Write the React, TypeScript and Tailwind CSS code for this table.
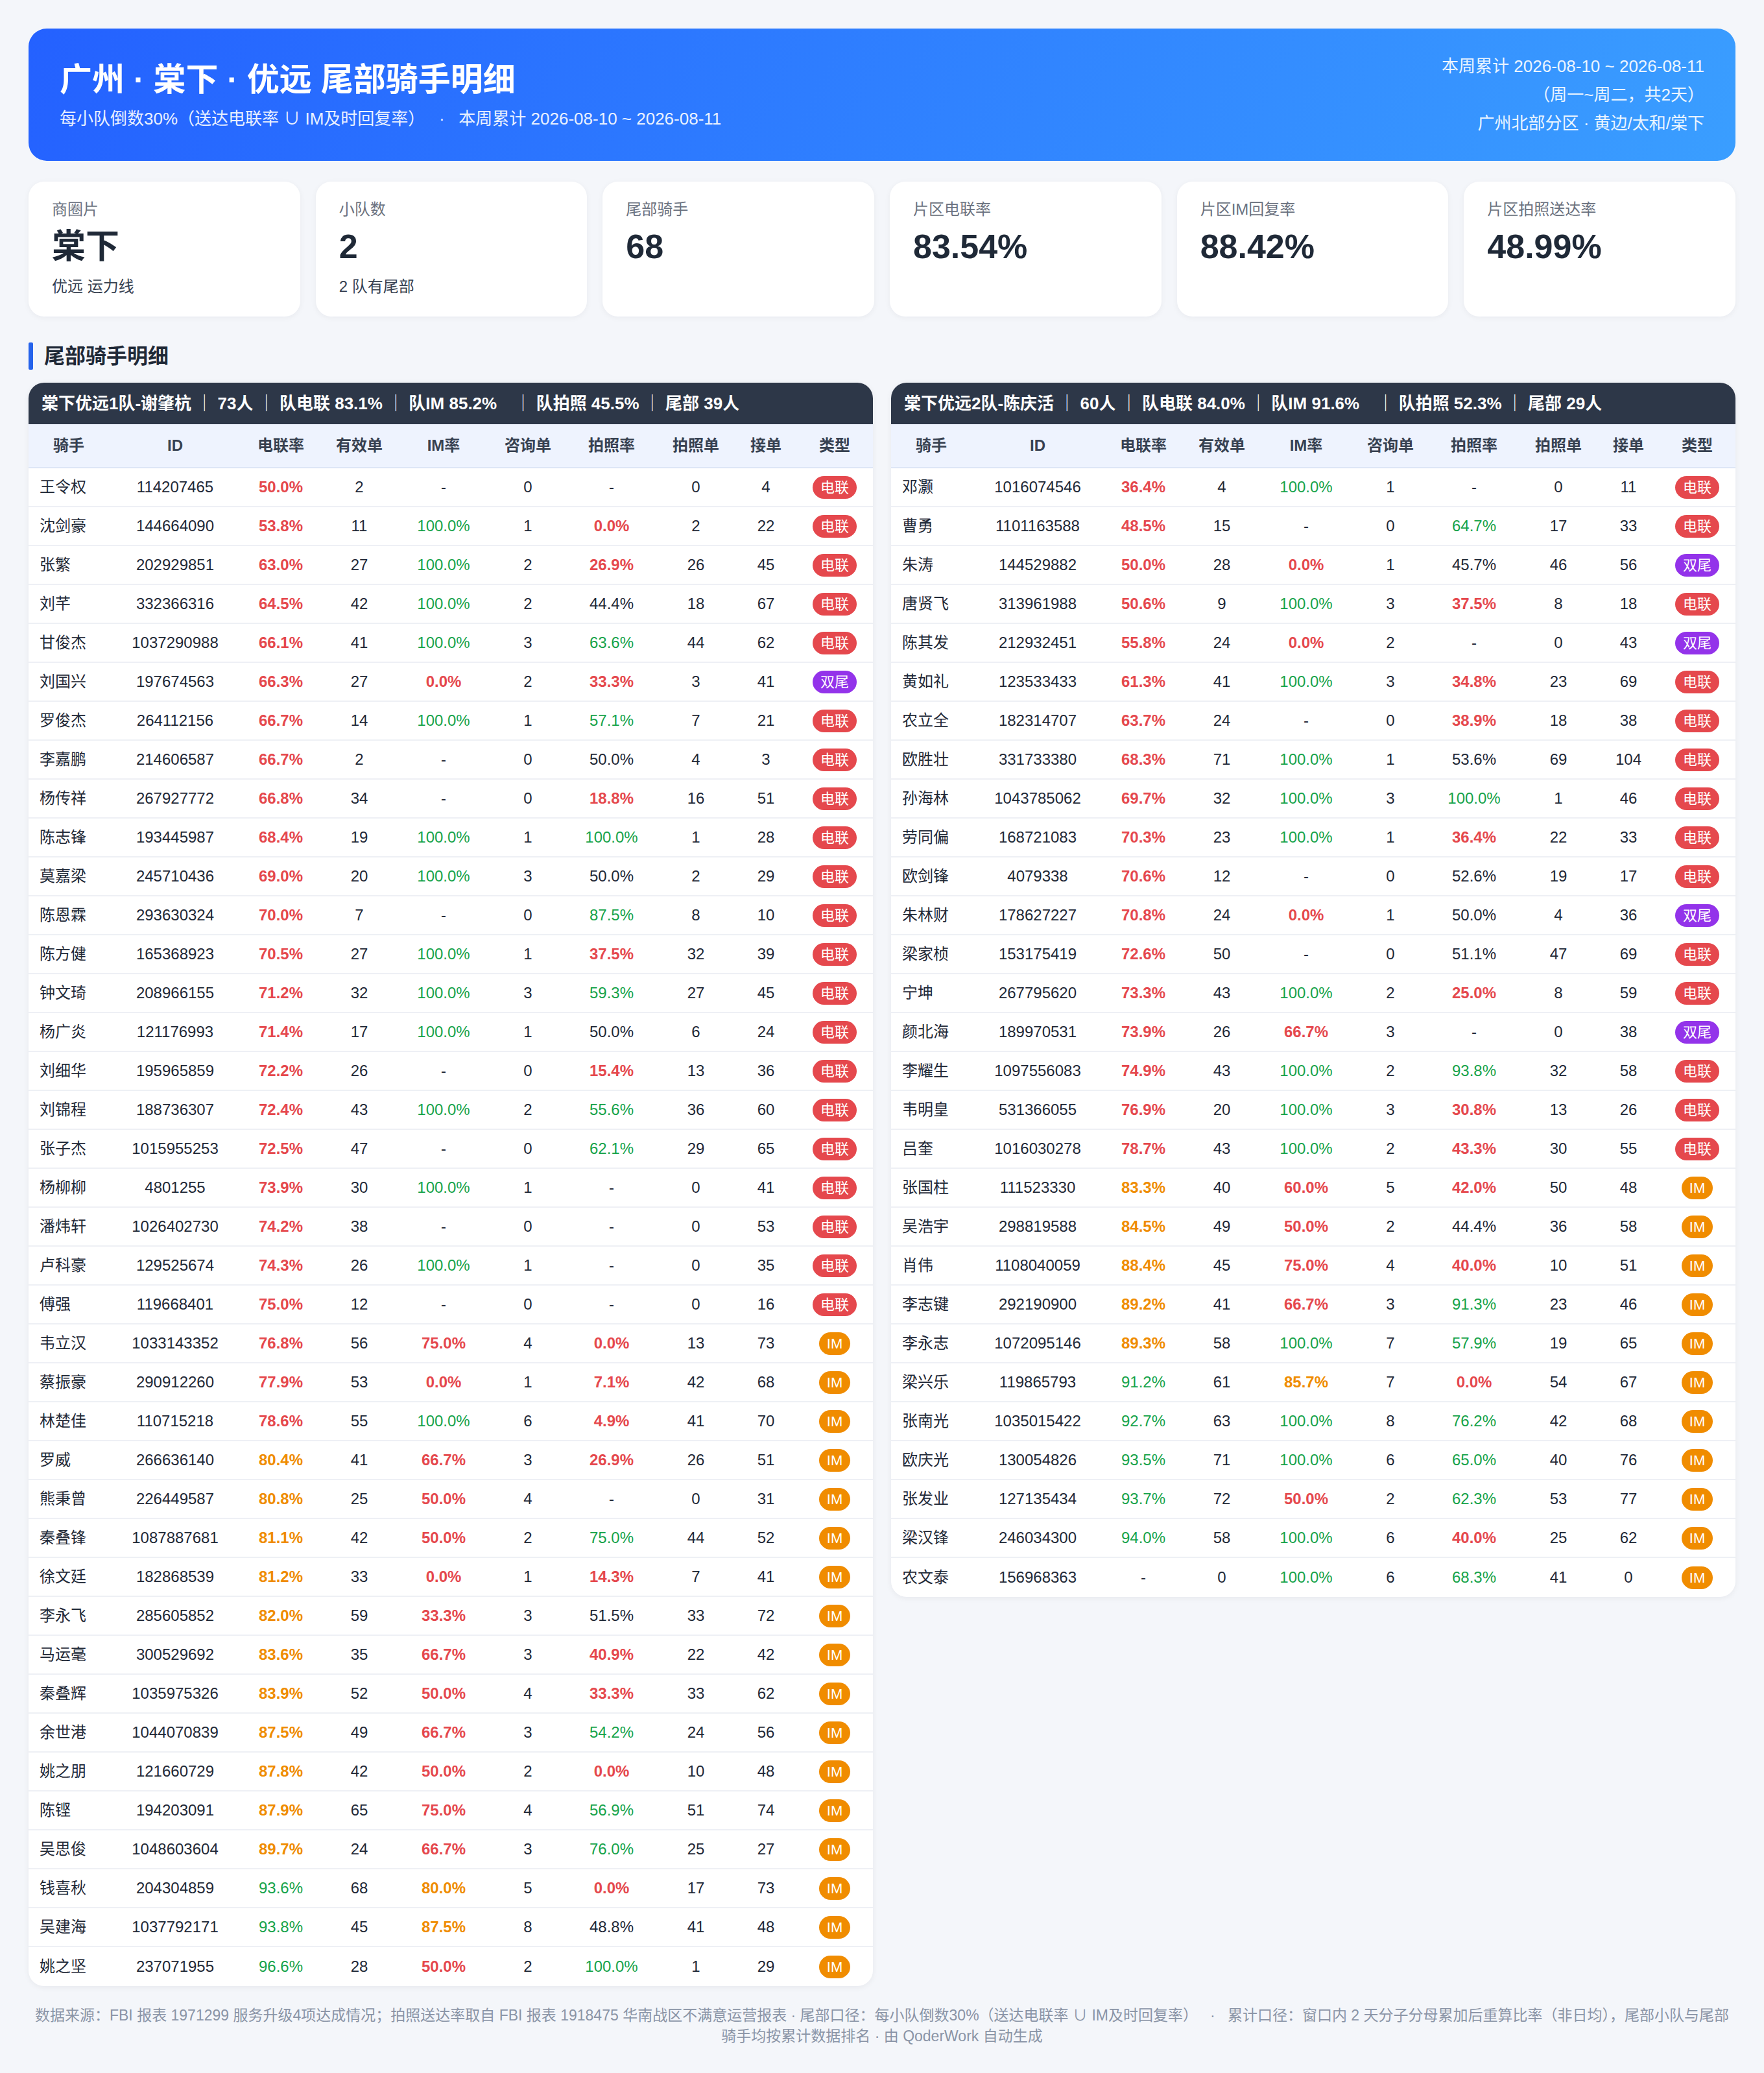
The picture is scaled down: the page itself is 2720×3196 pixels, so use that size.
import React from "react";

// ─── Data ─────────────────────────────────────────────────────────────────────

type Row = [string, string, string, number, string, number, string, number, number, string];

const team1: Row[] = [
  ["王令权", "114207465", "50.0%", 2, "-", 0, "-", 0, 4, "电联"],
  ["沈剑豪", "144664090", "53.8%", 11, "100.0%", 1, "0.0%", 2, 22, "电联"],
  ["张繁", "202929851", "63.0%", 27, "100.0%", 2, "26.9%", 26, 45, "电联"],
  ["刘芊", "332366316", "64.5%", 42, "100.0%", 2, "44.4%", 18, 67, "电联"],
  ["甘俊杰", "1037290988", "66.1%", 41, "100.0%", 3, "63.6%", 44, 62, "电联"],
  ["刘国兴", "197674563", "66.3%", 27, "0.0%", 2, "33.3%", 3, 41, "双尾"],
  ["罗俊杰", "264112156", "66.7%", 14, "100.0%", 1, "57.1%", 7, 21, "电联"],
  ["李嘉鹏", "214606587", "66.7%", 2, "-", 0, "50.0%", 4, 3, "电联"],
  ["杨传祥", "267927772", "66.8%", 34, "-", 0, "18.8%", 16, 51, "电联"],
  ["陈志锋", "193445987", "68.4%", 19, "100.0%", 1, "100.0%", 1, 28, "电联"],
  ["莫嘉梁", "245710436", "69.0%", 20, "100.0%", 3, "50.0%", 2, 29, "电联"],
  ["陈恩霖", "293630324", "70.0%", 7, "-", 0, "87.5%", 8, 10, "电联"],
  ["陈方健", "165368923", "70.5%", 27, "100.0%", 1, "37.5%", 32, 39, "电联"],
  ["钟文琦", "208966155", "71.2%", 32, "100.0%", 3, "59.3%", 27, 45, "电联"],
  ["杨广炎", "121176993", "71.4%", 17, "100.0%", 1, "50.0%", 6, 24, "电联"],
  ["刘细华", "195965859", "72.2%", 26, "-", 0, "15.4%", 13, 36, "电联"],
  ["刘锦程", "188736307", "72.4%", 43, "100.0%", 2, "55.6%", 36, 60, "电联"],
  ["张子杰", "1015955253", "72.5%", 47, "-", 0, "62.1%", 29, 65, "电联"],
  ["杨柳柳", "4801255", "73.9%", 30, "100.0%", 1, "-", 0, 41, "电联"],
  ["潘炜轩", "1026402730", "74.2%", 38, "-", 0, "-", 0, 53, "电联"],
  ["卢科豪", "129525674", "74.3%", 26, "100.0%", 1, "-", 0, 35, "电联"],
  ["傅强", "119668401", "75.0%", 12, "-", 0, "-", 0, 16, "电联"],
  ["韦立汉", "1033143352", "76.8%", 56, "75.0%", 4, "0.0%", 13, 73, "IM"],
  ["蔡振豪", "290912260", "77.9%", 53, "0.0%", 1, "7.1%", 42, 68, "IM"],
  ["林楚佳", "110715218", "78.6%", 55, "100.0%", 6, "4.9%", 41, 70, "IM"],
  ["罗威", "266636140", "80.4%", 41, "66.7%", 3, "26.9%", 26, 51, "IM"],
  ["熊秉曾", "226449587", "80.8%", 25, "50.0%", 4, "-", 0, 31, "IM"],
  ["秦叠锋", "1087887681", "81.1%", 42, "50.0%", 2, "75.0%", 44, 52, "IM"],
  ["徐文廷", "182868539", "81.2%", 33, "0.0%", 1, "14.3%", 7, 41, "IM"],
  ["李永飞", "285605852", "82.0%", 59, "33.3%", 3, "51.5%", 33, 72, "IM"],
  ["马运毫", "300529692", "83.6%", 35, "66.7%", 3, "40.9%", 22, 42, "IM"],
  ["秦叠辉", "1035975326", "83.9%", 52, "50.0%", 4, "33.3%", 33, 62, "IM"],
  ["余世港", "1044070839", "87.5%", 49, "66.7%", 3, "54.2%", 24, 56, "IM"],
  ["姚之朋", "121660729", "87.8%", 42, "50.0%", 2, "0.0%", 10, 48, "IM"],
  ["陈铿", "194203091", "87.9%", 65, "75.0%", 4, "56.9%", 51, 74, "IM"],
  ["吴思俊", "1048603604", "89.7%", 24, "66.7%", 3, "76.0%", 25, 27, "IM"],
  ["钱喜秋", "204304859", "93.6%", 68, "80.0%", 5, "0.0%", 17, 73, "IM"],
  ["吴建海", "1037792171", "93.8%", 45, "87.5%", 8, "48.8%", 41, 48, "IM"],
  ["姚之坚", "237071955", "96.6%", 28, "50.0%", 2, "100.0%", 1, 29, "IM"],
];

const team2: Row[] = [
  ["邓灏", "1016074546", "36.4%", 4, "100.0%", 1, "-", 0, 11, "电联"],
  ["曹勇", "1101163588", "48.5%", 15, "-", 0, "64.7%", 17, 33, "电联"],
  ["朱涛", "144529882", "50.0%", 28, "0.0%", 1, "45.7%", 46, 56, "双尾"],
  ["唐贤飞", "313961988", "50.6%", 9, "100.0%", 3, "37.5%", 8, 18, "电联"],
  ["陈其发", "212932451", "55.8%", 24, "0.0%", 2, "-", 0, 43, "双尾"],
  ["黄如礼", "123533433", "61.3%", 41, "100.0%", 3, "34.8%", 23, 69, "电联"],
  ["农立全", "182314707", "63.7%", 24, "-", 0, "38.9%", 18, 38, "电联"],
  ["欧胜壮", "331733380", "68.3%", 71, "100.0%", 1, "53.6%", 69, 104, "电联"],
  ["孙海林", "1043785062", "69.7%", 32, "100.0%", 3, "100.0%", 1, 46, "电联"],
  ["劳同偏", "168721083", "70.3%", 23, "100.0%", 1, "36.4%", 22, 33, "电联"],
  ["欧剑锋", "4079338", "70.6%", 12, "-", 0, "52.6%", 19, 17, "电联"],
  ["朱林财", "178627227", "70.8%", 24, "0.0%", 1, "50.0%", 4, 36, "双尾"],
  ["梁家桢", "153175419", "72.6%", 50, "-", 0, "51.1%", 47, 69, "电联"],
  ["宁坤", "267795620", "73.3%", 43, "100.0%", 2, "25.0%", 8, 59, "电联"],
  ["颜北海", "189970531", "73.9%", 26, "66.7%", 3, "-", 0, 38, "双尾"],
  ["李耀生", "1097556083", "74.9%", 43, "100.0%", 2, "93.8%", 32, 58, "电联"],
  ["韦明皇", "531366055", "76.9%", 20, "100.0%", 3, "30.8%", 13, 26, "电联"],
  ["吕奎", "1016030278", "78.7%", 43, "100.0%", 2, "43.3%", 30, 55, "电联"],
  ["张国柱", "111523330", "83.3%", 40, "60.0%", 5, "42.0%", 50, 48, "IM"],
  ["吴浩宇", "298819588", "84.5%", 49, "50.0%", 2, "44.4%", 36, 58, "IM"],
  ["肖伟", "1108040059", "88.4%", 45, "75.0%", 4, "40.0%", 10, 51, "IM"],
  ["李志键", "292190900", "89.2%", 41, "66.7%", 3, "91.3%", 23, 46, "IM"],
  ["李永志", "1072095146", "89.3%", 58, "100.0%", 7, "57.9%", 19, 65, "IM"],
  ["梁兴乐", "119865793", "91.2%", 61, "85.7%", 7, "0.0%", 54, 67, "IM"],
  ["张南光", "1035015422", "92.7%", 63, "100.0%", 8, "76.2%", 42, 68, "IM"],
  ["欧庆光", "130054826", "93.5%", 71, "100.0%", 6, "65.0%", 40, 76, "IM"],
  ["张发业", "127135434", "93.7%", 72, "50.0%", 2, "62.3%", 53, 77, "IM"],
  ["梁汉锋", "246034300", "94.0%", 58, "100.0%", 6, "40.0%", 25, 62, "IM"],
  ["农文泰", "156968363", "-", 0, "100.0%", 6, "68.3%", 41, 0, "IM"],
];

const stats = [
  { label: "商圈片", value: "棠下", sub: "优远 运力线" },
  { label: "小队数", value: "2", sub: "2 队有尾部" },
  { label: "尾部骑手", value: "68", sub: "" },
  { label: "片区电联率", value: "83.54%", sub: "" },
  { label: "片区IM回复率", value: "88.42%", sub: "" },
  { label: "片区拍照送达率", value: "48.99%", sub: "" },
];

const columns = ["骑手", "ID", "电联率", "有效单", "IM率", "咨询单", "拍照率", "拍照单", "接单", "类型"];

const gridCols = "grid grid-cols-[124px_204px_122px_120px_140px_120px_138px_122px_94px_118px] items-center";

// ─── Helpers ──────────────────────────────────────────────────────────────────

function rateClass(v: string) {
  if (v === "-") return "text-[#1f2937]";
  const n = parseFloat(v);
  if (n < 80) return "text-[#e5484d] font-bold";
  if (n < 90) return "text-[#ef8c00] font-bold";
  return "text-[#16a34a]";
}

function photoClass(v: string) {
  if (v === "-") return "text-[#1f2937]";
  const n = parseFloat(v);
  if (n < 44) return "text-[#e5484d] font-bold";
  if (n >= 54) return "text-[#16a34a]";
  return "text-[#1f2937]";
}

function Badge({ type }: { type: string }) {
  const color = type === "电联" ? "bg-[#e5484d]" : type === "双尾" ? "bg-[#9333ea]" : "bg-[#f08c00]";
  return (
    <span className={`${color} inline-block rounded-full px-[12px] py-[1px] text-[22px] text-white`}>
      {type}
    </span>
  );
}

function TeamTable({ title, rows }: { title: React.ReactNode; rows: Row[] }) {
  return (
    <div className="overflow-hidden rounded-[24px] bg-white shadow-[0_2px_10px_rgba(15,23,42,0.06)]">
      <div className="flex h-[64px] items-center whitespace-pre bg-[#2d3748] px-[20px] text-[26px] font-bold text-white">
        {title}
      </div>
      <div className={`${gridCols} h-[68px] border-b-2 border-[#dde6f6] bg-[#eef3fe] text-center text-[24px] font-bold text-[#374151]`}>
        {columns.map((c) => (
          <div key={c}>{c}</div>
        ))}
      </div>
      {rows.map((r, i) => (
        <div
          key={i}
          className={`${gridCols} h-[60px] text-center text-[24px] text-[#1f2937] ${
            i < rows.length - 1 ? "border-b-2 border-[#eef0f5]" : ""
          }`}
        >
          <div className="pl-[17px] text-left">{r[0]}</div>
          <div>{r[1]}</div>
          <div className={rateClass(r[2])}>{r[2]}</div>
          <div>{r[3]}</div>
          <div className={rateClass(r[4])}>{r[4]}</div>
          <div>{r[5]}</div>
          <div className={photoClass(r[6])}>{r[6]}</div>
          <div>{r[7]}</div>
          <div>{r[8]}</div>
          <div>
            <Badge type={r[9]} />
          </div>
        </div>
      ))}
    </div>
  );
}

function Sep({ wide = false }: { wide?: boolean }) {
  return <span className={wide ? "pl-[20px] font-normal" : "font-normal"}>{" ｜ "}</span>;
}

// ─── Page ─────────────────────────────────────────────────────────────────────

export default function App() {
  return (
    <div className="min-h-screen bg-[#f4f6fa] px-[44px] pt-[44px] pb-[44px] font-['Liberation_Sans','Noto_Sans_CJK_SC',sans-serif]">
      {/* ── Header ── */}
      <div className="flex h-[204px] items-center justify-between rounded-[28px] bg-[linear-gradient(115deg,#2461ff,#3a9eff)] px-[48px] text-white">
        <div>
          <h1 className="text-[50px] leading-[66px] font-bold">广州 · 棠下 · 优远 尾部骑手明细</h1>
          <p className="mt-[8px] text-[26px] leading-[39px] text-white/90">
            每小队倒数30%（送达电联率 ∪ IM及时回复率）&nbsp;&nbsp;&nbsp;·&nbsp;&nbsp;&nbsp;本周累计 2026-08-10 ~ 2026-08-11
          </p>
        </div>
        <div className="text-right text-[26px] leading-[44px] text-white/90">
          <div>本周累计 2026-08-10 ~ 2026-08-11</div>
          <div>（周一~周二，共2天）</div>
          <div>广州北部分区 · 黄边/太和/棠下</div>
        </div>
      </div>

      {/* ── Stat cards ── */}
      <div className="mt-[32px] grid grid-cols-6 gap-[24px]">
        {stats.map((s) => (
          <div
            key={s.label}
            className="h-[208px] rounded-[24px] bg-white px-[36px] pt-[25px] shadow-[0_2px_10px_rgba(15,23,42,0.05)]"
          >
            <div className="text-[24px] leading-[36px] text-[#6b7280]">{s.label}</div>
            <div className="mt-[8px] text-[52px] leading-[62px] font-bold text-[#1f2937]">{s.value}</div>
            {s.sub && <div className="mt-[13px] text-[24px] leading-[36px] text-[#374151]">{s.sub}</div>}
          </div>
        ))}
      </div>

      {/* ── Section title ── */}
      <div className="mt-[40px] flex items-center gap-[17px]">
        <div className="h-[42px] w-[7px] rounded-[2px] bg-[#2563eb]" />
        <h2 className="text-[32px] leading-[42px] font-bold text-[#1f2937]">尾部骑手明细</h2>
      </div>

      {/* ── Tables ── */}
      <div className="mt-[20px] grid grid-cols-2 items-start gap-[28px]">
        <TeamTable
          rows={team1}
          title={
            <>
              棠下优远1队-谢肇杭<Sep />73人<Sep />队电联 83.1%<Sep />队IM 85.2%<Sep wide />队拍照 45.5%<Sep />尾部 39人
            </>
          }
        />
        <TeamTable
          rows={team2}
          title={
            <>
              棠下优远2队-陈庆活<Sep />60人<Sep />队电联 84.0%<Sep />队IM 91.6%<Sep wide />队拍照 52.3%<Sep />尾部 29人
            </>
          }
        />
      </div>

      {/* ── Footer ── */}
      <p className="mt-[29px] text-center text-[23px] leading-[32px] text-[#8a94a6]">
        数据来源：FBI 报表 1971299 服务升级4项达成情况；拍照送达率取自 FBI 报表 1918475 华南战区不满意运营报表 · 尾部口径：每小队倒数30%（送达电联率 ∪ IM及时回复率）&nbsp;&nbsp;&nbsp;·&nbsp;&nbsp;&nbsp;累计口径：窗口内 2 天分子分母累加后重算比率（非日均），尾部小队与尾部骑手均按累计数据排名 · 由 QoderWork 自动生成
      </p>
    </div>
  );
}
